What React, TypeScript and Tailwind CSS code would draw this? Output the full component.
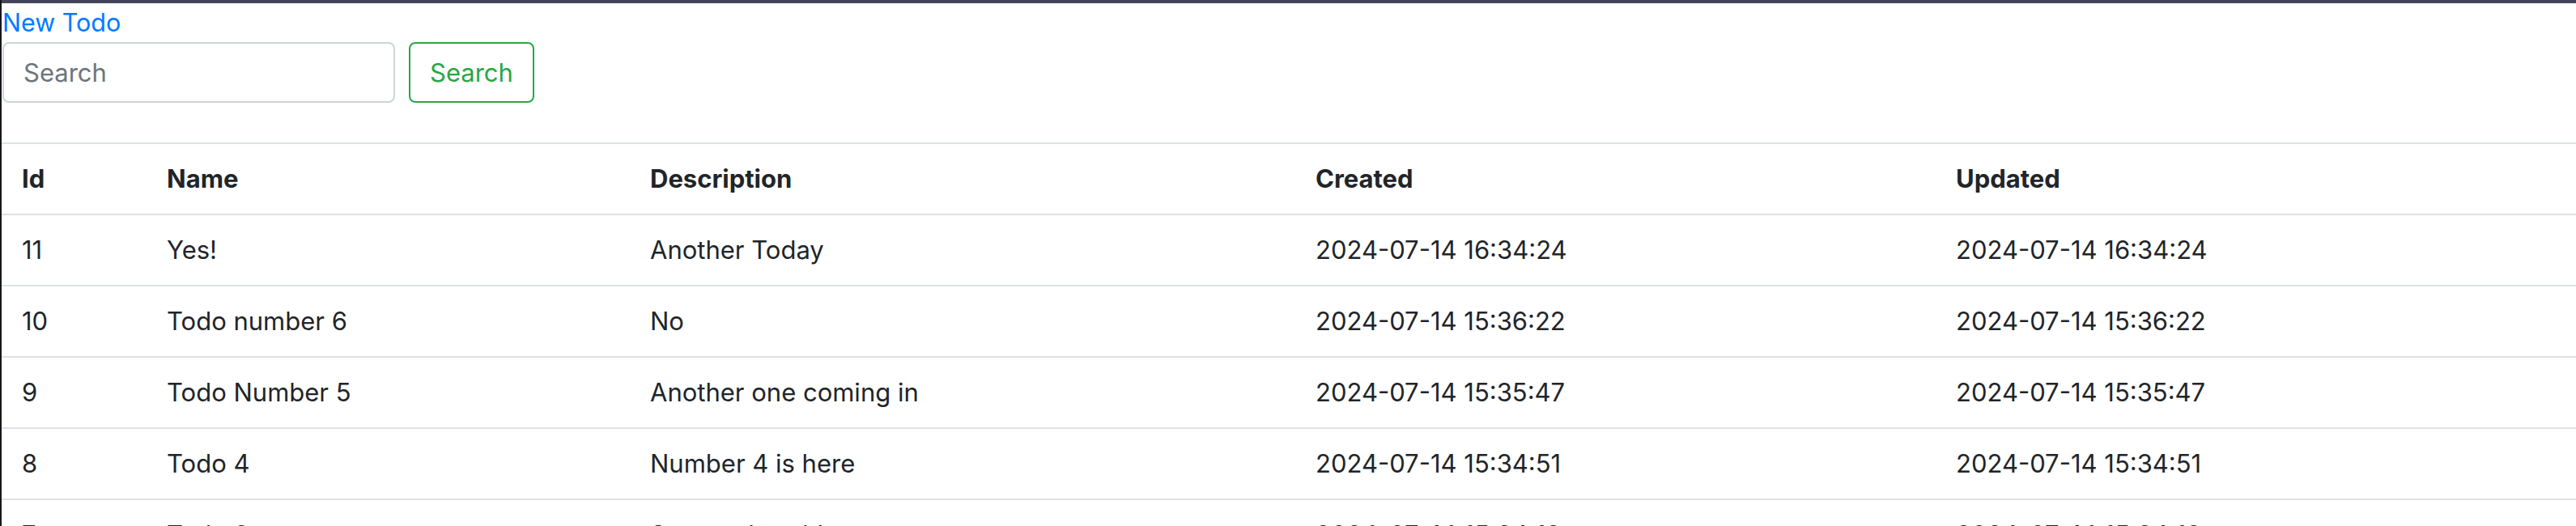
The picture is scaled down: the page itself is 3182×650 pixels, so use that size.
import React, { useState } from 'react';

interface Todo {
  id: number;
  name: string;
  description: string;
  created: string;
  updated: string;
}

const TODOS: Todo[] = [
  { id: 11, name: 'Yes!', description: 'Another Today', created: '2024-07-14 16:34:24', updated: '2024-07-14 16:34:24' },
  { id: 10, name: 'Todo number 6', description: 'No', created: '2024-07-14 15:36:22', updated: '2024-07-14 15:36:22' },
  { id: 9, name: 'Todo Number 5', description: 'Another one coming in', created: '2024-07-14 15:35:47', updated: '2024-07-14 15:35:47' },
  { id: 8, name: 'Todo 4', description: 'Number 4 is here', created: '2024-07-14 15:34:51', updated: '2024-07-14 15:34:51' },
  { id: 7, name: 'Todo 3', description: 'Some other thing', created: '2024-07-14 15:34:12', updated: '2024-07-14 15:34:12' },
];

const App: React.FC = () => {
  const [query, setQuery] = useState('');

  return (
    <div className="min-h-[650px] bg-white border-l-2 border-[#17171b] text-[#212529] font-['Inter',sans-serif] text-[31px] leading-[48px]">
      <div className="h-[4px] bg-[#42455b]" />
      <div className="pl-px">
        <a href="#" className="block text-[#007bff] text-[30.5px]">New Todo</a>
        <form className="flex gap-[17px]" onSubmit={e => e.preventDefault()}>
          <input
            value={query}
            onChange={e => setQuery(e.target.value)}
            placeholder="Search"
            className="w-[485px] h-[75px] px-[24px] border-2 border-[#ced4da] rounded-[8px] text-[#495057] placeholder:text-[#6c757d] outline-none"
          />
          <button className="h-[75px] px-[24px] border-2 border-[#28a745] rounded-[8px] text-[#28a745]">
            Search
          </button>
        </form>
      </div>

      <table className="mt-[49px] w-full table-fixed border-collapse text-left">
        <thead>
          <tr className="border-t-2 border-[#dee2e6]">
            <th className="w-[180px] pl-[25px] pr-[24px] pt-[19px] pb-[19px] font-bold">Id</th>
            <th className="w-[597px] px-[24px] pt-[19px] pb-[19px] font-bold">Name</th>
            <th className="w-[822px] px-[24px] pt-[19px] pb-[19px] font-bold">Description</th>
            <th className="w-[791px] px-[24px] pt-[19px] pb-[19px] font-bold">Created</th>
            <th className="px-[24px] pt-[19px] pb-[19px] font-bold">Updated</th>
          </tr>
        </thead>
        <tbody>
          {TODOS.map(t => (
            <tr key={t.id} className="border-t-2 border-[#dee2e6]">
              <td className="pl-[25px] pr-[24px] pt-[19px] pb-[19px]">{t.id}</td>
              <td className="px-[24px] pt-[19px] pb-[19px]">{t.name}</td>
              <td className="px-[24px] pt-[19px] pb-[19px]">{t.description}</td>
              <td className="px-[24px] pt-[19px] pb-[19px]">{t.created}</td>
              <td className="px-[24px] pt-[19px] pb-[19px]">{t.updated}</td>
            </tr>
          ))}
        </tbody>
      </table>
    </div>
  );
};

export default App;
